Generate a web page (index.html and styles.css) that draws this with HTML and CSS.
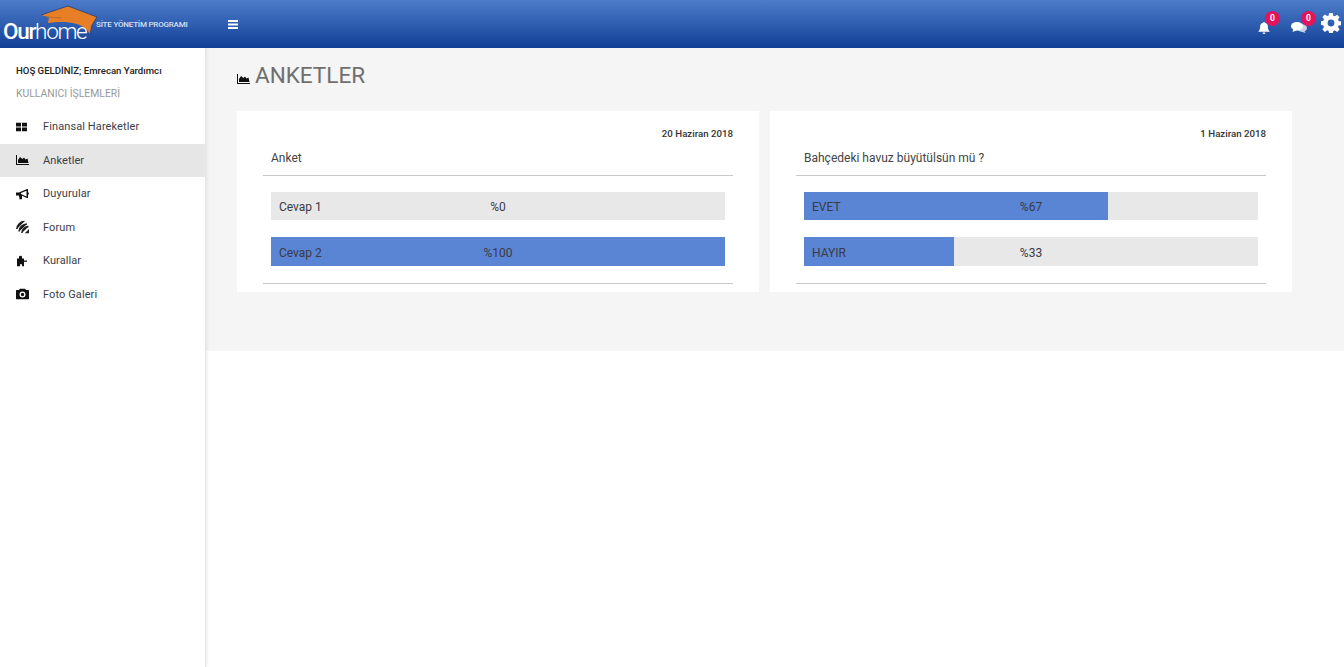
FILE: index.html
```html
<!DOCTYPE html>
<html lang="en">
<head>
  <meta charset="UTF-8">
  <title>Anketler</title>
  <link rel="stylesheet" href="styles.css">
</head>
<body>
  <header class="topbar">
    <div class="brand">
      <svg class="roof" viewBox="0 0 57 30" width="57" height="30">
        <path d="M0 10 L27 1 L56 12 L51 20 L49 29 L46 25 C38 16 20 16 7 18 L8 12 Z" fill="#e87f26"/>
        <path d="M0 10 L27 1 L56 12 L51 20 L49 29" fill="none" stroke="#2a3f6e" stroke-width="0.800"/>
        <path d="M5 12 L21 13" fill="none" stroke="#a8662e" stroke-width="0.800"/>
      </svg>
      <span class="brand-name"><b>Our</b>home</span>
      <span class="brand-sub">SİTE YÖNETİM PROGRAMI</span>
    </div>
    <svg class="menu-toggle" viewBox="0 0 10 9" width="10" height="9"><path d="M0 0h10v2H0zM0 3.500h10v2H0zM0 7h10v2H0z" fill="#fff"/></svg>
    <div class="top-icons">
      <div class="top-icon bell">
        <svg viewBox="0 0 14 14" width="12" height="12"><path d="M7 0c.6 0 1 .4 1 1 2.300.4 3.500 2.200 3.500 4.500 0 3 1 4.500 2.500 6H0c1.500-1.500 2.500-3 2.500-6C2.500 3.200 3.700 1.400 6 1c0-.6.400-1 1-1zM5.400 12.200h3.200C8.500 13.300 7.900 14 7 14s-1.500-.7-1.600-1.800z" fill="#fff"/></svg>
        <span class="badge">0</span>
      </div>
      <div class="top-icon chat">
        <svg viewBox="0 0 16 11" width="16" height="11"><ellipse cx="11" cy="6" rx="5" ry="3.800" fill="#c9d3e6"/><path d="M13 8.500 L14.500 11 L10 9.500Z" fill="#c9d3e6"/><ellipse cx="6" cy="4.200" rx="6" ry="4.200" fill="#fff"/><path d="M2.500 7 L1.500 10 L6 8.200Z" fill="#fff"/></svg>
        <span class="badge">0</span>
      </div>
      <svg class="gear" viewBox="0 0 20 20" width="20" height="20"><path fill="#fff" fill-rule="evenodd" d="M8.200 0h3.600l.5 2.700 1.500.6 2.300-1.600 2.500 2.500-1.600 2.300.6 1.500 2.700.5v3.600l-2.700.5-.6 1.500 1.600 2.300-2.500 2.500-2.300-1.600-1.500.6-.5 2.700H8.200l-.5-2.700-1.500-.6-2.300 1.600-2.500-2.500 1.600-2.300-.6-1.500L0 11.800V8.200l2.400-.5.6-1.500-1.600-2.300 2.500-2.500 2.300 1.600 1.500-.6zM10 6.600a3.400 3.400 0 1 0 0 6.800 3.400 3.400 0 0 0 0-6.800z"/></svg>
    </div>
  </header>

  <div class="layout">
    <aside class="sidebar">
      <div class="welcome">HOŞ GELDİNİZ; Emrecan Yardımcı</div>
      <div class="side-title">KULLANICI İŞLEMLERİ</div>
      <nav class="side-nav">
        <a class="side-link">
          <svg viewBox="0 0 11 9" width="11" height="9"><path d="M0 0h5v4H0zM6 0h5v4H6zM0 5h5v4H0zM6 5h5v4H6z"/></svg>
          Finansal Hareketler
        </a>
        <a class="side-link active">
          <svg viewBox="0 0 13 10" width="13" height="10"><path d="M0 0h1v9h12v1H0z"/><path d="M2 8V5l2-3 2.500 2 1.500-1.500 1.500 2 2-1L12.500 8z"/></svg>
          Anketler
        </a>
        <a class="side-link">
          <svg viewBox="0 0 13 11" width="13" height="11"><path d="M0 4h3L11 0.500h1v3.200c.6.200 1 .7 1 1.300s-.4 1.100-1 1.300V9.500h-1L6 7.200V11H3.500L3 7H0z"/><path d="M10.500 2.200 5 4.600v1l5.500 2.300z" fill="#fff"/></svg>
          Duyurular
        </a>
        <a class="side-link">
          <svg viewBox="0 0 13 13" width="13" height="13" fill="none" stroke="#222" stroke-width="1.500"><path d="M.8 8.500C1 4.500 4.500 1 8.500.8"/><path d="M3 11C3 7 6.500 3.400 11 3.400"/><path d="M5.800 12.500C5.800 9 8.800 6 12.500 6"/><path d="M13 8.500v4.500H8.500z" fill="#222" stroke="none"/></svg>
          Forum
        </a>
        <a class="side-link">
          <svg viewBox="0 0 11 11" width="11" height="11"><path d="M3 1.500a1.500 1.500 0 0 1 3 0V3h2v2h3v1.200H8V11H6V9.500a1 1 0 0 0-2 0V11H1V3h2z"/></svg>
          Kurallar
        </a>
        <a class="side-link">
          <svg viewBox="0 0 13 11" width="13" height="11"><path fill-rule="evenodd" d="M4 0h5l1 1.500h2c.6 0 1 .4 1 1V10c0 .6-.4 1-1 1H1c-.6 0-1-.4-1-1V2.500c0-.6.400-1 1-1h2zM6.500 3a3 3 0 1 0 0 6 3 3 0 0 0 0-6zm0 1.300a1.700 1.700 0 1 1 0 3.400 1.700 1.700 0 0 1 0-3.400z"/></svg>
          Foto Galeri
        </a>
      </nav>
    </aside>

    <main class="content">
      <section class="panel">
        <h1 class="page-title">
          <svg viewBox="0 0 13 10" width="13" height="10"><path d="M0 0h1v9h12v1H0z"/><path d="M2 8V5l2-3 2.500 2 1.500-1.500 1.500 2 2-1L12.500 8z"/></svg>
          ANKETLER
        </h1>
        <div class="cards">
          <article class="card">
            <div class="card-date">20 Haziran 2018</div>
            <div class="card-question">Anket</div>
            <div class="answers">
              <div class="answer">
                <div class="answer-fill" style="width: 0%"></div>
                <span class="answer-label">Cevap 1</span>
                <span class="answer-value">%0</span>
              </div>
              <div class="answer">
                <div class="answer-fill" style="width: 100%"></div>
                <span class="answer-label">Cevap 2</span>
                <span class="answer-value">%100</span>
              </div>
            </div>
          </article>
          <article class="card">
            <div class="card-date">1 Haziran 2018</div>
            <div class="card-question">Bahçedeki havuz büyütülsün mü ?</div>
            <div class="answers">
              <div class="answer">
                <div class="answer-fill" style="width: 67%"></div>
                <span class="answer-label">EVET</span>
                <span class="answer-value">%67</span>
              </div>
              <div class="answer">
                <div class="answer-fill" style="width: 33%"></div>
                <span class="answer-label">HAYIR</span>
                <span class="answer-value">%33</span>
              </div>
            </div>
          </article>
        </div>
      </section>
    </main>
  </div>
</body>
</html>
```

FILE: styles.css
```css
* {
  box-sizing: border-box;
}
body {
  margin: 0;
  height: 667px;
  overflow: hidden;
  font-family: Roboto, "Liberation Sans", sans-serif;
  font-size: 12px;
  color: #333;
  background: #fff;
  display: flex;
  flex-direction: column;
}
.topbar {
  height: 48px;
  flex: none;
  display: flex;
  align-items: center;
  background: linear-gradient(to bottom, #4d7cca, #123f96);
  position: relative;
  z-index: 2;
}
.brand {
  width: 228px;
  height: 48px;
  position: relative;
  flex: none;
}
.roof {
  position: absolute;
  left: 41px;
  top: 5px;
}
.brand-name {
  position: absolute;
  left: 3px;
  top: 18px;
  font-size: 22.500px;
  line-height: 26px;
  font-weight: 300;
  color: #fff;
  letter-spacing: -1.300px;
}
.brand-name b {
  font-weight: 500;
}
.brand-sub {
  position: absolute;
  left: 96px;
  top: 19px;
  font-size: 8px;
  line-height: 12px;
  font-weight: 500;
  color: #d5e0f3;
  white-space: nowrap;
  letter-spacing: -0.200px;
}
.top-icons {
  margin-left: auto;
  align-self: flex-start;
  display: flex;
  align-items: flex-start;
  padding: 13px 3px 0 0;
}
.top-icon {
  position: relative;
  display: flex;
  margin-top: 9px;
}
.chat {
  margin-left: 21px;
}
.badge {
  position: absolute;
  top: -11px;
  width: 15px;
  height: 15px;
  border-radius: 50%;
  background: #e5135c;
  color: #fff;
  font-size: 8.500px;
  font-weight: 700;
  line-height: 15px;
  text-align: center;
}
.bell .badge {
  left: 7px;
}
.chat .badge {
  left: 10px;
}
.gear {
  margin-left: 14px;
}
.layout {
  flex: 1;
  display: flex;
  min-height: 0;
}
.sidebar {
  width: 206px;
  flex: none;
  background: #fff;
  border-right: 1px solid #e6e6e6;
  box-shadow: 1px 0 3px rgba(0, 0, 0, 0.08);
  position: relative;
}
.welcome {
  padding: 16px 0 0 16px;
  font-size: 9.600px;
  line-height: 14px;
  font-weight: 500;
  color: #222;
}
.side-title {
  padding: 9px 0 0 16px;
  font-size: 10.400px;
  line-height: 14px;
  color: #999;
}
.side-nav {
  margin-top: 9px;
  display: flex;
  flex-direction: column;
}
.side-link {
  height: 33.500px;
  display: flex;
  align-items: center;
  padding-left: 43px;
  position: relative;
  font-size: 11px;
  color: #3d3d47;
  letter-spacing: 0.100px;
}
.side-link svg {
  position: absolute;
  left: 16px;
  top: 50%;
  transform: translateY(-50%);
  fill: #111;
}
.side-link.active {
  background: #e6e6e6;
}
.content {
  flex: 1;
  min-width: 0;
}
.panel {
  height: 303px;
  background: #f5f5f5;
  padding: 2px 52px 0 31px;
}
.page-title {
  margin: 0 0 12px;
  height: 49px;
  display: flex;
  align-items: center;
  gap: 5px;
  font-size: 22.500px;
  font-weight: 400;
  color: #6f6f6f;
}
.page-title svg {
  margin-top: 8px;
  fill: #111;
}
.cards {
  display: flex;
  gap: 11px;
}
.card {
  width: 522px;
  height: 181px;
  background: #fff;
  padding: 16px 26px 0;
}
.card-date {
  text-align: right;
  font-size: 9.700px;
  line-height: 14px;
  font-weight: 500;
  color: #333;
}
.card-question {
  margin-top: 2px;
  height: 33px;
  padding: 7px 0 0 8px;
  border-bottom: 1px solid #c8c8c8;
  font-size: 12px;
  line-height: 16px;
  color: #444;
}
.answers {
  height: 108px;
  padding: 16px 8px 0;
  border-bottom: 1px solid #c8c8c8;
  display: flex;
  flex-direction: column;
  gap: 17px;
}
.answer {
  height: 28px;
  background: #e8e8e8;
  display: grid;
  grid-template-columns: 1fr auto 1fr;
  align-items: center;
  font-size: 12px;
  color: #3a3a44;
}
.answer + .answer {
  height: 29px;
}
.answer-fill {
  grid-area: 1 / 1 / 2 / 4;
  height: 100%;
  background: #5a85d5;
}
.answer-label {
  grid-area: 1 / 1;
  padding: 2px 0 0 8px;
}
.answer-value {
  grid-area: 1 / 2;
  padding-top: 2px;
}
```
